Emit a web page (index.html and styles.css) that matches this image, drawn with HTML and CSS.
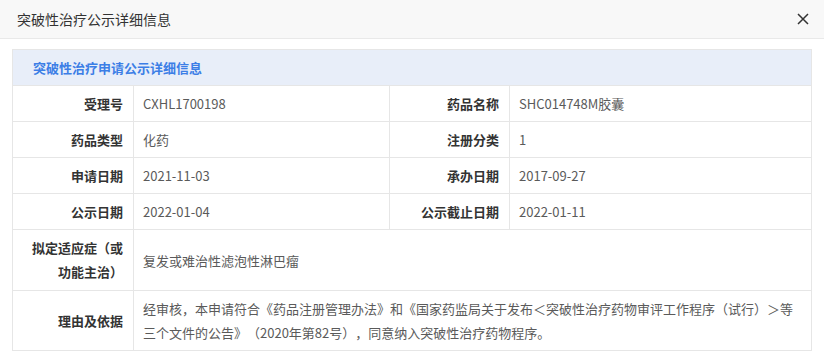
FILE: index.html
```html
<!DOCTYPE html>
<html lang="zh-CN">
<head>
<meta charset="utf-8">
<title>突破性治疗公示详细信息</title>
<link rel="stylesheet" href="styles.css">
</head>
<body>
<div class="dialog">
  <div class="dialog-header">
    <span class="dialog-title">突破性治疗公示详细信息</span>
    <button class="close-btn" aria-label="关闭">
      <svg width="12" height="12" viewBox="0 0 12 12"><path d="M1 1 L11 11 M11 1 L1 11" stroke="#333" stroke-width="1.5" fill="none"/></svg>
    </button>
  </div>
  <div class="dialog-body">
    <table class="detail-table">
      <colgroup>
        <col class="c-label">
        <col class="c-value">
        <col class="c-label2">
        <col>
      </colgroup>
      <thead>
        <tr><th colspan="4" class="section-title">突破性治疗申请公示详细信息</th></tr>
      </thead>
      <tbody>
        <tr>
          <td class="label">受理号</td><td class="value">CXHL1700198</td>
          <td class="label">药品名称</td><td class="value">SHC014748M胶囊</td>
        </tr>
        <tr>
          <td class="label">药品类型</td><td class="value">化药</td>
          <td class="label">注册分类</td><td class="value">1</td>
        </tr>
        <tr>
          <td class="label">申请日期</td><td class="value">2021-11-03</td>
          <td class="label">承办日期</td><td class="value">2017-09-27</td>
        </tr>
        <tr>
          <td class="label">公示日期</td><td class="value">2022-01-04</td>
          <td class="label">公示截止日期</td><td class="value">2022-01-11</td>
        </tr>
        <tr>
          <td class="label tall">拟定适应症（或功能主治）</td>
          <td class="value" colspan="3">复发或难治性滤泡性淋巴瘤</td>
        </tr>
        <tr>
          <td class="label tall">理由及依据</td>
          <td class="value" colspan="3">经审核，本申请符合《药品注册管理办法》和《国家药监局关于发布＜突破性治疗药物审评工作程序（试行）＞等三个文件的公告》（2020年第82号），同意纳入突破性治疗药物程序。</td>
        </tr>
      </tbody>
    </table>
  </div>
</div>
</body>
</html>
```

FILE: styles.css
```css
* { box-sizing: border-box; }
html, body {
  margin: 0;
  padding: 0;
  background: #fff;
  font-family: "Noto Sans CJK SC", "Noto Sans", sans-serif;
  text-spacing-trim: space-all;
}
.dialog {
  width: 824px;
}
.dialog-header {
  height: 39px;
  background: #f8f8f8;
  border-bottom: 1px solid #e9e9e9;
  display: flex;
  align-items: center;
  justify-content: space-between;
  padding: 0 15px 0 17px;
}
.dialog-title {
  font-size: 14px;
  color: #333;
  line-height: 20px;
}
.close-btn {
  border: 0;
  background: transparent;
  padding: 0;
  width: 12px;
  height: 12px;
  display: flex;
  cursor: pointer;
}
.dialog-body {
  padding: 10px 12px 0 12px;
}
.detail-table {
  width: 800px;
  border-collapse: collapse;
  table-layout: fixed;
  font-size: 13px;
}
.c-label { width: 121px; }
.c-value { width: 256px; }
.c-label2 { width: 120px; }
.detail-table th,
.detail-table td {
  border: 1px solid #e6e6e6;
}
.section-title {
  background: #e8eef9;
  color: #3c7ee6;
  font-weight: bold;
  text-align: left;
  height: 36px;
  padding: 0 20px;
  font-size: 13px;
}
.label {
  text-align: right;
  font-weight: bold;
  color: #333;
  padding: 6px 10px 5px 10px;
  line-height: 24px;
}
.label.tall {
  padding-top: 6px;
  padding-bottom: 6px;
}
.value {
  color: #5a5a5a;
  padding: 6px 10px 5px 9px;
  line-height: 24px;
}
```
